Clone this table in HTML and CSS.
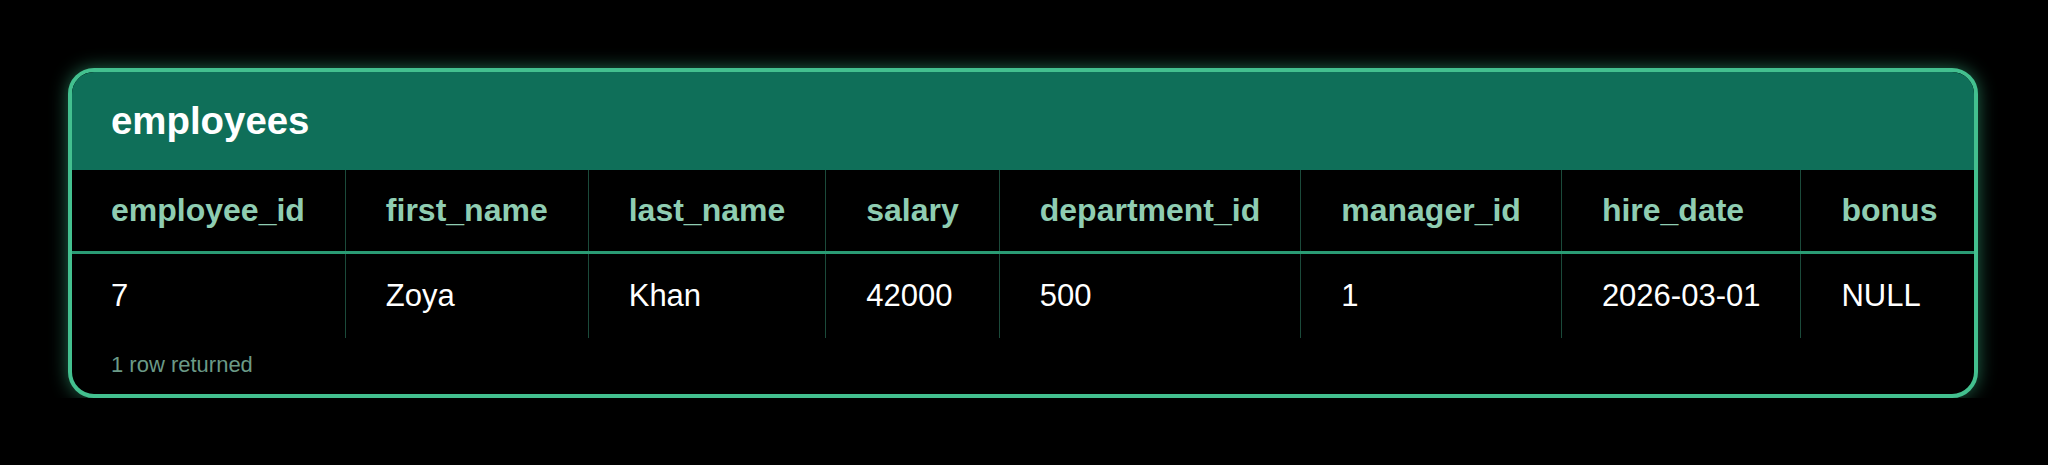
FILE: index.html
```html
<!DOCTYPE html>
<html lang="en">
<head>
<meta charset="utf-8">
<title>employees</title>
<link rel="stylesheet" href="styles.css">
</head>
<body>
  <section class="card">
    <header class="card-head">
      <h1 class="card-title">employees</h1>
    </header>
    <table class="grid">
      <thead>
        <tr>
          <th>employee_id</th>
          <th>first_name</th>
          <th>last_name</th>
          <th>salary</th>
          <th>department_id</th>
          <th>manager_id</th>
          <th>hire_date</th>
          <th>bonus</th>
        </tr>
      </thead>
      <tbody>
        <tr>
          <td>7</td>
          <td>Zoya</td>
          <td>Khan</td>
          <td>42000</td>
          <td>500</td>
          <td>1</td>
          <td>2026-03-01</td>
          <td>NULL</td>
        </tr>
      </tbody>
    </table>
    <footer class="card-foot">1 row returned</footer>
  </section>
</body>
</html>
```

FILE: styles.css
```css
html, body {
  margin: 0;
  background: #000;
}

body {
  padding: 68px 70px 0 68px;
  font-family: "Liberation Sans", Arial, sans-serif;
}

.card {
  border: 4px solid #43c08f;
  border-radius: 26px;
  overflow: hidden;
  background: #000;
  box-shadow: 0 0 18px rgba(60, 190, 140, 0.55);
}

.card-head {
  background: #0f6f59;
  padding: 26px 39px;
}

.card-title {
  margin: 0;
  font-size: 38.4px;
  line-height: 46px;
  font-weight: 700;
  color: #fff;
}

.grid {
  width: 100%;
  border-collapse: collapse;
}

.grid th,
.grid td {
  text-align: left;
  white-space: nowrap;
  padding: 0 40px;
  border-right: 1px solid #1b4a3a;
}

.grid th:first-child,
.grid td:first-child {
  padding-left: 39px;
}

.grid th:last-child,
.grid td:last-child {
  border-right: none;
}

.grid th {
  font-size: 32px;
  line-height: 37px;
  font-weight: 700;
  color: #8fcdb2;
  padding-top: 22px;
  padding-bottom: 22px;
  border-bottom: 3px solid #2a9b74;
}

.grid td {
  font-size: 31px;
  line-height: 36px;
  font-weight: 400;
  color: #fff;
  padding-top: 24px;
  padding-bottom: 24px;
}

.card-foot {
  padding: 14px 39px 17px;
  font-size: 22px;
  line-height: 25px;
  color: #6b9a87;
}
```
